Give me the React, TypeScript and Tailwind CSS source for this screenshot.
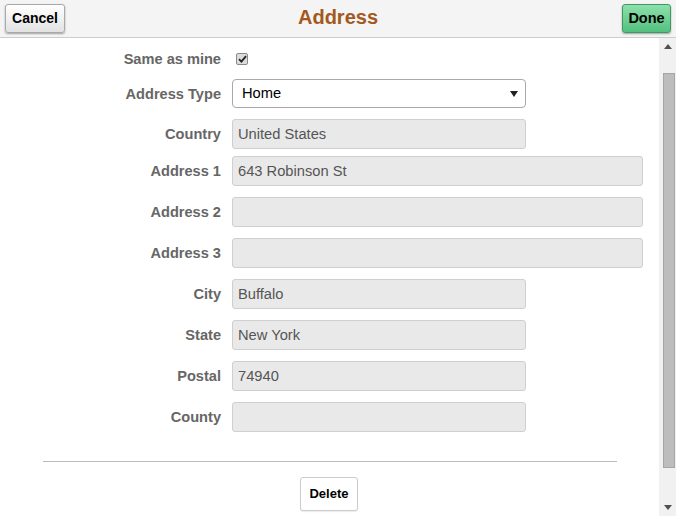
import React from "react";

const font = { fontFamily: '"Liberation Sans", Arial, sans-serif' };

function Label({ children }: { children: React.ReactNode }) {
  return (
    <div className="w-[221px] pt-[2px] text-right text-[14.6px] font-bold text-[#666666] shrink-0">
      {children}
    </div>
  );
}

function Field({ label, value, wide, mt }: { label: string; value?: string; wide?: boolean; mt: string }) {
  return (
    <div className={`flex items-center ${mt}`}>
      <Label>{label}</Label>
      <div
        className={`ml-[11px] h-[30px] ${wide ? "w-[411px]" : "w-[294px]"} rounded-[3px] border border-[#cfcfcf] bg-[#e9e9e9] pl-[5px] flex items-center text-[14.7px] text-[#555555]`}
      >
        {value}
      </div>
    </div>
  );
}

export default function App() {
  return (
    <div className="w-[676px] h-[516px] overflow-hidden bg-white flex flex-col" style={font}>
      {/* Header */}
      <div className="h-[38px] shrink-0 bg-[#f4f4f4] border-b border-[#cccccc] flex items-center justify-between px-[5px] relative">
        <button className="h-[29px] w-[60px] rounded-[3px] border border-[#a9a9a9] bg-gradient-to-b from-[#ffffff] to-[#e2e2e2] shadow-[0_1px_2px_rgba(0,0,0,0.35)] text-[14px] font-bold text-black">
          Cancel
        </button>
        <div className="absolute left-0 right-0 top-0 h-[34px] flex items-center justify-center text-[20px] font-bold text-[#a3581e] pointer-events-none">
          Address
        </div>
        <button className="h-[29px] w-[49px] rounded-[3px] border border-[#3e9a62] bg-gradient-to-b from-[#8ce0aa] to-[#52c17f] shadow-[0_1px_2px_rgba(0,0,0,0.35)] text-[14.5px] font-bold text-black">
          Done
        </button>
      </div>

      <div className="flex flex-1 min-h-0">
        {/* Content */}
        <div className="flex-1 flex flex-col">
          <div className="flex items-center mt-[11px] h-[20px]">
            <Label>Same as mine</Label>
            <div className="ml-[15px] w-[12px] h-[12px] rounded-[2px] border border-[#8a8a8a] bg-[#dcdcdc] flex items-center justify-center">
              <svg width="9" height="8" viewBox="0 0 9 8">
                <path d="M1 4.2 L3.4 6.6 L8 1.2" stroke="#222" strokeWidth="1.8" fill="none" />
              </svg>
            </div>
          </div>

          <div className="flex items-center mt-[10px]">
            <Label>Address Type</Label>
            <div className="ml-[11px] h-[29px] w-[294px] rounded-[4px] border border-[#a9a9a9] bg-white flex items-center justify-between pl-[9px] pr-[7px] text-[14.7px] text-black">
              <span>Home</span>
              <svg width="8" height="6" viewBox="0 0 8 6">
                <path d="M0 0 H8 L4 6 Z" fill="#222" />
              </svg>
            </div>
          </div>

          <Field label="Country" value="United States" mt="mt-[11px]" />
          <Field label="Address 1" value="643 Robinson St" wide mt="mt-[7px]" />
          <Field label="Address 2" wide mt="mt-[11px]" />
          <Field label="Address 3" wide mt="mt-[11px]" />
          <Field label="City" value="Buffalo" mt="mt-[11px]" />
          <Field label="State" value="New York" mt="mt-[11px]" />
          <Field label="Postal" value="74940" mt="mt-[11px]" />
          <Field label="County" mt="mt-[11px]" />

          <div className="mt-[29px] ml-[43px] mr-[42px] h-px bg-[#bbbbbb]" />

          <div className="flex justify-center mt-[15px] pr-[1px]">
            <button className="h-[34px] w-[58px] rounded-[3px] border border-[#cccccc] bg-white text-[13px] font-bold text-black shadow-[0_1px_1px_rgba(0,0,0,0.08)]">
              Delete
            </button>
          </div>
        </div>

        {/* Scrollbar */}
        <div className="w-[17px] shrink-0 bg-[#f1f1f1] flex flex-col items-center">
          <div className="h-[17px] flex items-center justify-center">
            <svg width="8" height="5" viewBox="0 0 8 5">
              <path d="M0 5 L4 0 L8 5 Z" fill="#505050" />
            </svg>
          </div>
          <div className="mt-[18px] w-[12px] h-[395px] bg-[#bdbdbd] border border-[#a6a6a6] ml-[3px]" />
          <div className="flex-1" />
          <div className="h-[17px] flex items-center justify-center">
            <svg width="8" height="5" viewBox="0 0 8 5">
              <path d="M0 0 L8 0 L4 5 Z" fill="#505050" />
            </svg>
          </div>
        </div>
      </div>
    </div>
  );
}
